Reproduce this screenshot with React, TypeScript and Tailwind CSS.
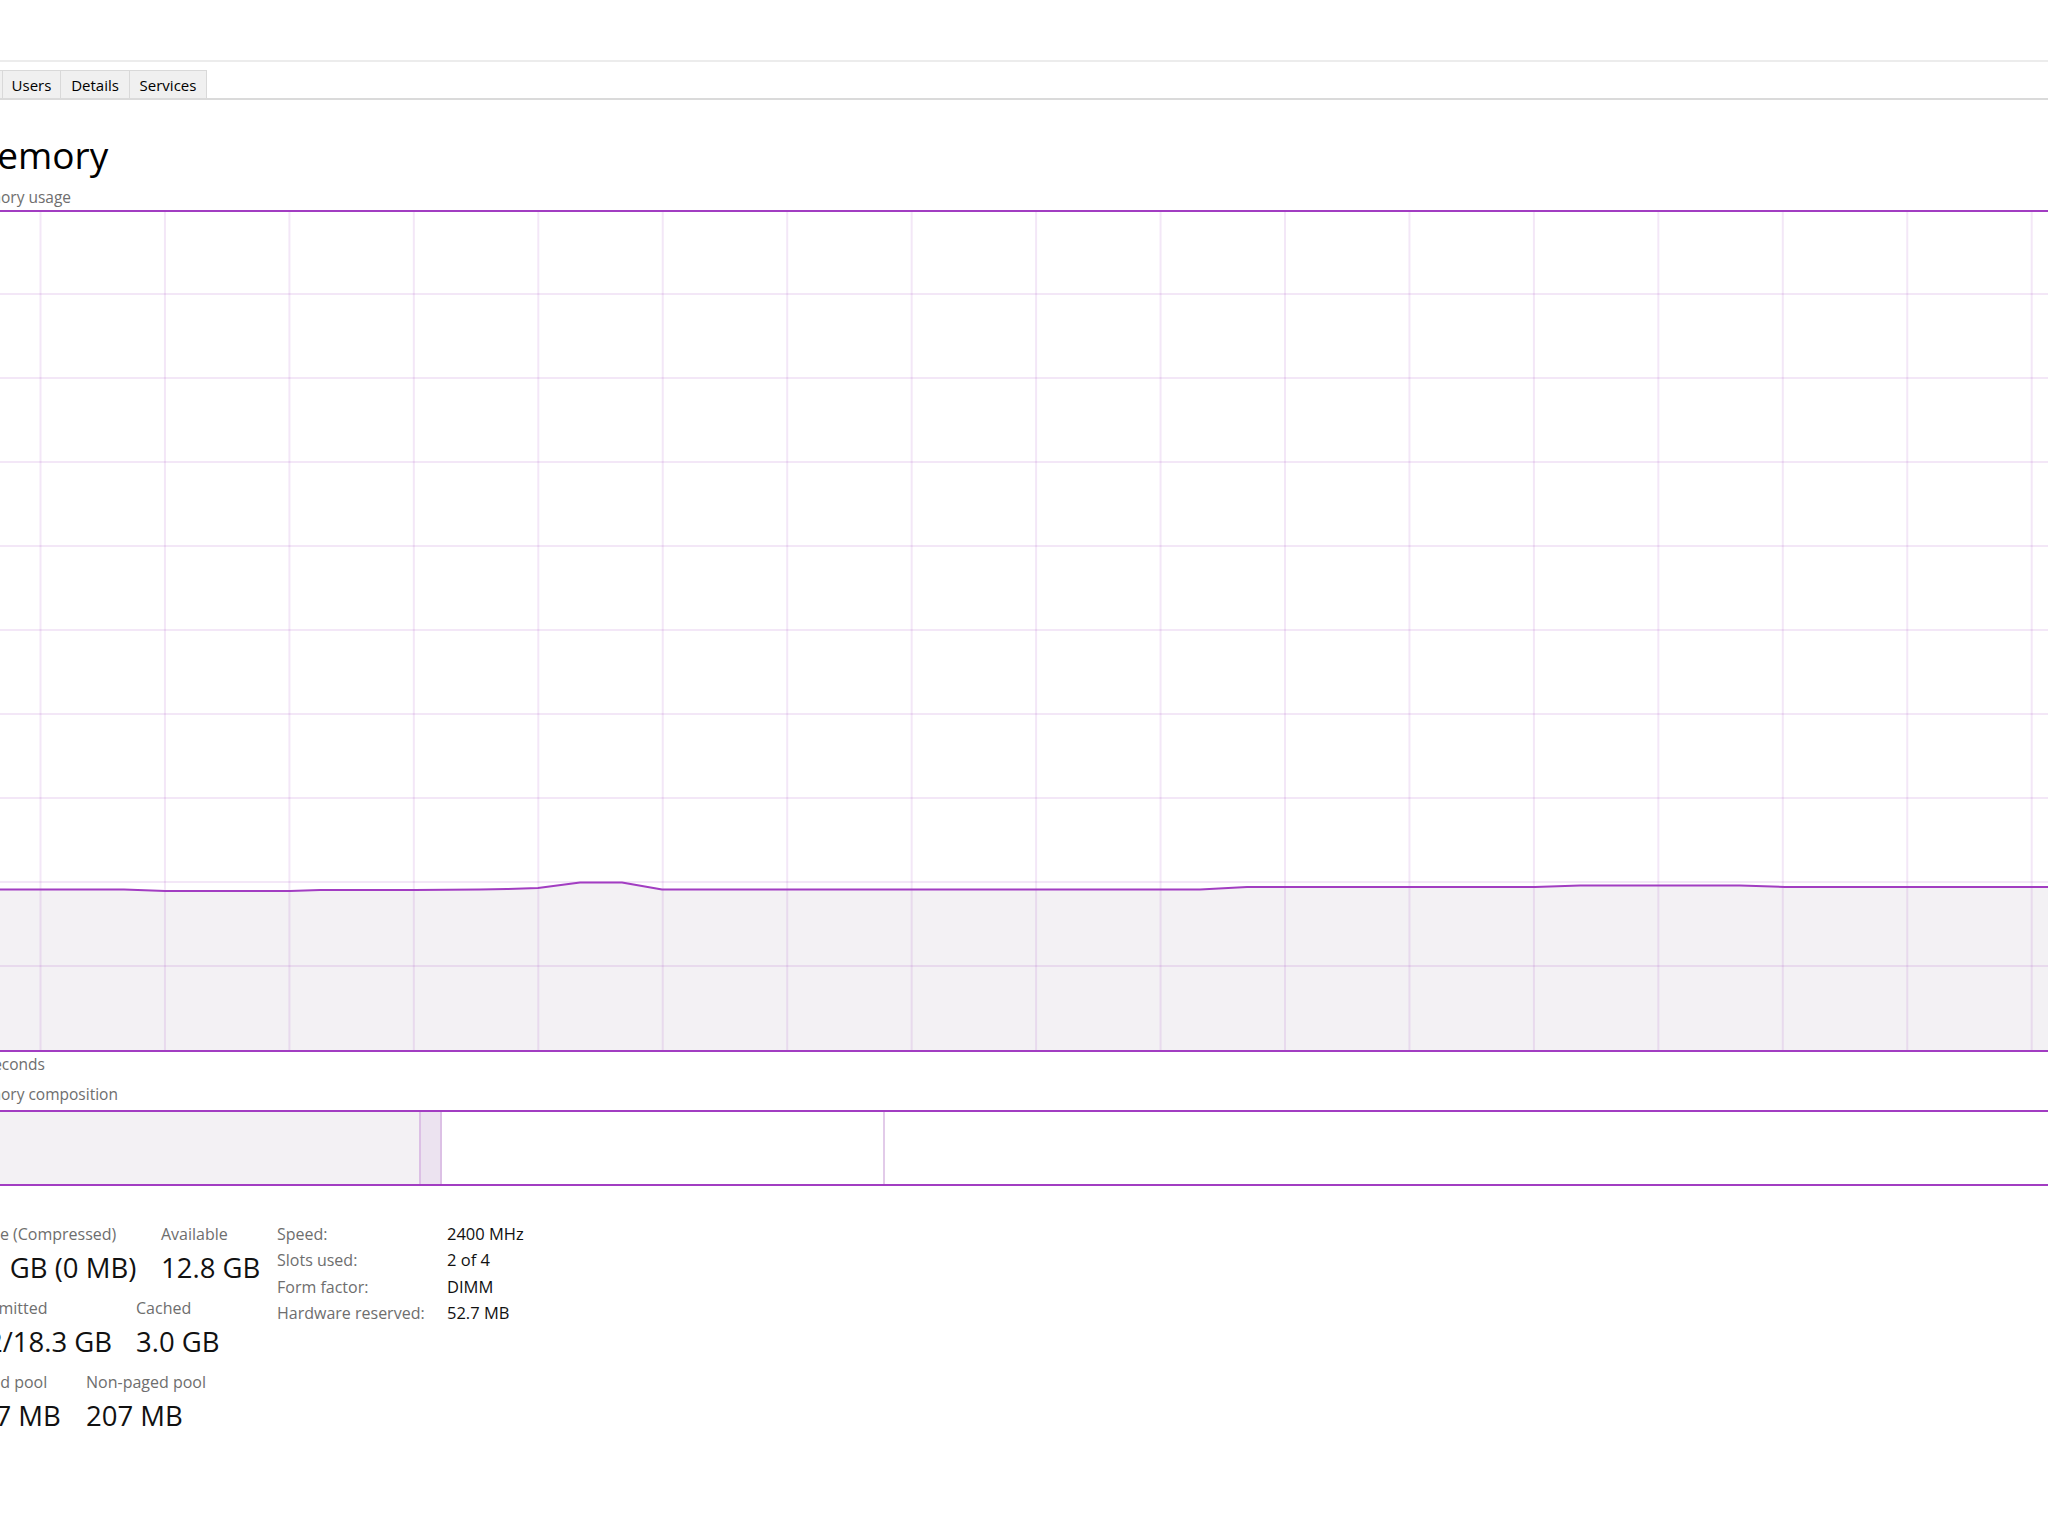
import React from "react";

const PURPLE = "#a23dc2";

function UsageGraph() {
  const W = 2120;
  const H = 838;
  const vx = Array.from({ length: 17 }, (_, k) => 76.5 + 124.45 * k);
  const hy = [82, 166, 250, 334, 418, 502, 586, 670, 754];
  const page: [number, number][] = [
    [-40, 889.5],
    [124, 889.5],
    [165, 891],
    [290, 891],
    [320, 890],
    [414, 890],
    [480, 889.5],
    [507, 889],
    [538, 888],
    [580, 882.5],
    [622, 882.5],
    [662, 889.5],
    [1200, 889.5],
    [1247, 887],
    [1535, 887],
    [1580, 885.5],
    [1740, 885.5],
    [1785, 887],
    [2100, 887],
  ];
  const pts = page.map(([x, y]) => [x + 36, y - 212] as [number, number]);
  const line = pts.map(([x, y]) => `${x},${y}`).join(" ");
  const fill = `${pts[0][0]},${H} ${line} ${pts[pts.length - 1][0]},${H}`;
  return (
    <svg width={W} height={H} className="block">
      <polygon points={fill} fill="#f3f1f4" />
      {hy.map((y) => (
        <line key={"h" + y} x1={0} x2={W} y1={y} y2={y} stroke="rgba(150,40,180,0.11)" strokeWidth={2} />
      ))}
      {vx.map((x) => (
        <line key={"v" + x} x1={x} x2={x} y1={0} y2={H} stroke="rgba(150,40,180,0.11)" strokeWidth={2} />
      ))}
      <polyline points={line} fill="none" stroke={PURPLE} strokeWidth={2} strokeLinejoin="round" />
    </svg>
  );
}

function Stat({ label, value, w }: { label: string; value: string; w?: string }) {
  return (
    <div className={w ?? ""}>
      <div className="h-[20px] leading-[20px] text-[16px] text-[#6e6e6e] whitespace-nowrap">{label}</div>
      <div className="mt-[6px] h-[36px] leading-[36px] text-[27.5px] text-[#111] whitespace-nowrap">{value}</div>
    </div>
  );
}

export default function App() {
  const tabs = [
    { t: "Startup", w: "w-[102px]" },
    { t: "Users", w: "w-[58px]" },
    { t: "Details", w: "w-[69px]" },
    { t: "Services", w: "w-[78px] border-r" },
  ];
  const specs: [string, string][] = [
    ["Speed:", "2400 MHz"],
    ["Slots used:", "2 of 4"],
    ["Form factor:", "DIMM"],
    ["Hardware reserved:", "52.7 MB"],
  ];
  return (
    <div className="w-[2048px] h-[1536px] overflow-hidden bg-white font-['Open_Sans',sans-serif] text-black">
      <div className="h-[60px]" />
      <div className="h-[2px] bg-[#ececec]" />
      <div className="flex pt-[8px] border-b-2 border-[#dadada] ml-[-100px]">
        {tabs.map((tb) => (
          <div
            key={tb.t}
            className={`flex h-[28px] items-center justify-center pt-[1px] border-t border-l border-[#d9d9d9] bg-[#f0f0f0] text-[15px] text-black ${tb.w}`}
          >
            {tb.t}
          </div>
        ))}
      </div>

      <div className="ml-[-36px] w-[2140px]">
        <div className="mt-[31px] h-[48px] leading-[48px] text-[37px]">Memory</div>
        <div className="mt-[8px] h-[20px] leading-[20px] text-[15.5px] text-[#6e6e6e]">Memory usage</div>
        <div className="mt-[3px] h-[842px] border-y-2 border-[#a23dc2] overflow-hidden">
          <UsageGraph />
        </div>
        <div className="mt-[2px] h-[20px] leading-[20px] text-[15.5px] text-[#6e6e6e]">60 seconds</div>
        <div className="mt-[10px] h-[20px] leading-[20px] text-[15.5px] text-[#6e6e6e]">Memory composition</div>
        <div className="mt-[6px] flex h-[76px] border-y-2 border-[#a23dc2]">
          <div className="w-[457px] bg-[#f3f1f4] border-r-2 border-[#dcc0e5]" />
          <div className="w-[21px] bg-[#ece3f0] border-r-2 border-[#dcc0e5]" />
          <div className="w-[443px] bg-white border-r-2 border-[#e2cbe9]" />
          <div className="flex-1 bg-white" />
        </div>

        <div className="mt-[38px] flex items-start">
          <div className="w-[313px] flex flex-col gap-[12px]">
            <div className="flex">
              <Stat w="w-[197px]" label="In use (Compressed)" value="3.1 GB (0 MB)" />
              <Stat label="Available" value="12.8 GB" />
            </div>
            <div className="flex">
              <Stat w="w-[172px]" label="Committed" value="4.2/18.3 GB" />
              <Stat label="Cached" value="3.0 GB" />
            </div>
            <div className="flex">
              <Stat w="w-[122px]" label="Paged pool" value="337 MB" />
              <Stat label="Non-paged pool" value="207 MB" />
            </div>
          </div>
          <div className="grid grid-cols-[170px_auto] mt-[-3px]">
            {specs.map(([k, v]) => (
              <React.Fragment key={k}>
                <div className="h-[26.3px] leading-[26px] text-[16px] text-[#6e6e6e] whitespace-nowrap">{k}</div>
                <div className="h-[26.3px] leading-[26px] text-[16.5px] text-[#111] whitespace-nowrap">{v}</div>
              </React.Fragment>
            ))}
          </div>
        </div>
      </div>
    </div>
  );
}
